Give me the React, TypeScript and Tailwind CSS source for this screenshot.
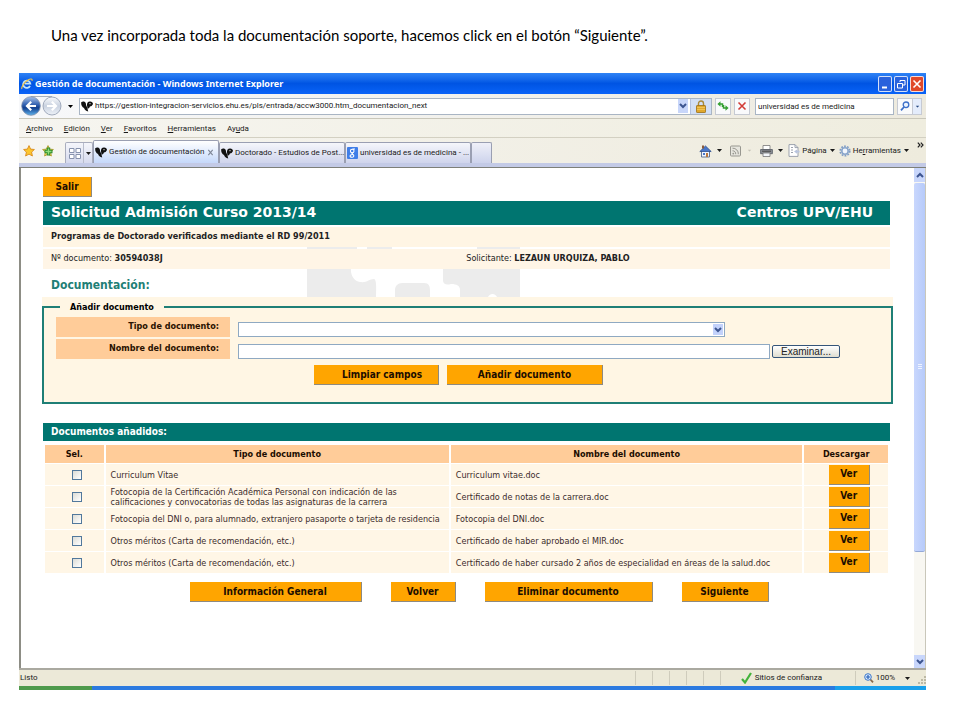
import type { ReactNode } from "react";
import clsx from "clsx";

type AddedDocument = {
  id: number;
  type: string;
  name: string;
};

const addedDocuments: AddedDocument[] = [
  { id: 1, type: "Curriculum Vitae", name: "Curriculum vitae.doc" },
  {
    id: 2,
    type: "Fotocopia de la Certificación Académica Personal con indicación de las calificaciones y convocatorias de todas las asignaturas de la carrera",
    name: "Certificado de notas de la carrera.doc",
  },
  {
    id: 3,
    type: "Fotocopia del DNI o, para alumnado, extranjero pasaporte o tarjeta de residencia",
    name: "Fotocopia del DNI.doc",
  },
  {
    id: 4,
    type: "Otros méritos (Carta de recomendación, etc.)",
    name: "Certificado de haber aprobado el MIR.doc",
  },
  {
    id: 5,
    type: "Otros méritos (Carta de recomendación, etc.)",
    name: "Certificado de haber cursado 2 años de especialidad en áreas de la salud.doc",
  },
];

// Each entry: text before the access key, the key itself, text after it.
const menuItems = [
  ["", "A", "rchivo"],
  ["", "E", "dición"],
  ["", "V", "er"],
  ["", "F", "avoritos"],
  ["", "H", "erramientas"],
  ["Ay", "u", "da"],
];

function Caret({ className }: { className?: string }) {
  return (
    <svg viewBox="0 0 5 3" className={clsx("h-[3px] w-[5px] shrink-0", className)} aria-hidden="true">
      <path d="M0 0h5L2.5 3z" fill="currentColor" />
    </svg>
  );
}

function Chevron({ up = false }: { up?: boolean }) {
  return (
    <svg viewBox="0 0 8 6" className="h-[6px] w-[8px]" aria-hidden="true">
      <path d={up ? "M1 5l3-3 3 3" : "M1 1l3 3 3-3"} fill="none" stroke="#3d5590" strokeWidth="2" />
    </svg>
  );
}

function IeLogo() {
  return (
    <svg viewBox="0 0 12 12" className="h-3 w-3 shrink-0" aria-hidden="true">
      <path d="M9 7.8A3.6 3.6 0 1 1 9.3 5.6H4" fill="none" stroke="#bfe3fb" strokeWidth="1.8" />
      <path d="M1 11C0 9.5 3 4.5 7 2c3-1.8 4.5-1 4 .8" fill="none" stroke="#f3c544" strokeWidth="1.1" />
    </svg>
  );
}

function UniversityLogo() {
  return (
    <svg viewBox="0 0 12 11" className="h-[11px] w-3 shrink-0" aria-hidden="true">
      <path d="M.2 1.2C1.8 0 4.300.500 4.800 2.200 5.100 3.600 5 5 6.200 6.300L7.200 10.500C5 10 3.600 8.800 3 7 1 6.300-.1 3.900.2 1.200z" fill="#111" />
      <path d="M6 4.500C5.600 2 7.200.3 9.200.500 10.800.600 11.900 1.700 12 3 11.200 4.700 10.200 5.500 8.900 5.500 8.500 6.800 7.600 7.600 6.600 7.800z" fill="#111" />
      <path d="M8.300 2.700h1.400" stroke="#fff" strokeWidth=".8" />
    </svg>
  );
}

function GoogleFavicon() {
  return (
    <svg viewBox="0 0 11 12" className="h-3 w-[11px] shrink-0" aria-hidden="true">
      <rect width="11" height="12" rx="1" fill="#3f7ee8" />
      <circle cx="5.2" cy="4" r="1.8" fill="none" stroke="#fff" strokeWidth="1.1" />
      <path d="M8 2H5.500M6 5.700c-2 .6-.8 1.300.2 2C7.500 9 6.500 10.300 5 10.300s-2.600-1-1.500-2.200c.6-.5 1.500-.6 2.500-.5" fill="none" stroke="#fff" strokeWidth="1.1" />
    </svg>
  );
}

function NavArrows() {
  return (
    <svg viewBox="0 0 41 20" className="h-5 w-[41px] shrink-0" aria-hidden="true">
      <defs>
        <linearGradient id="back" x1="0" y1="0" x2="0" y2="1">
          <stop offset="0" stopColor="#a9c3ea" />
          <stop offset=".45" stopColor="#2c5cad" />
          <stop offset=".6" stopColor="#123f8e" />
          <stop offset="1" stopColor="#5fb4ee" />
        </linearGradient>
        <linearGradient id="forward" x1="0" y1="0" x2="0" y2="1">
          <stop offset="0" stopColor="#fafbfd" />
          <stop offset=".5" stopColor="#c9d2e0" />
          <stop offset="1" stopColor="#eef2f8" />
        </linearGradient>
      </defs>
      <path d="M10 .5h21" stroke="#a8b0bd" />
      <circle cx="10" cy="10" r="9.3" fill="url(#back)" stroke="#7d8da8" strokeWidth=".8" />
      <circle cx="31" cy="10" r="9" fill="url(#forward)" stroke="#98a3b5" strokeWidth=".9" />
      <path d="M15 10H6.500M10.200 5.800 6 10l4.200 4.200" fill="none" stroke="#fff" strokeWidth="2.2" />
      <path d="M26 10h8.500M30.800 5.800 35 10l-4.200 4.200" fill="none" stroke="#fff" strokeWidth="2.2" />
    </svg>
  );
}

function StarIcon({ add = false }: { add?: boolean }) {
  return (
    <svg viewBox="0 0 12 12" className="h-3 w-3" aria-hidden="true">
      <path
        d="M6 .6l1.600 3.500 3.800.4-2.800 2.600.8 3.900L6 9.100 2.600 11l.8-3.900L.6 4.500l3.800-.4z"
        fill={add ? "#f6e36a" : "#fcc62d"}
        stroke={add ? "#b09a2b" : "#d98a1c"}
        strokeWidth=".9"
      />
      {add ? (
        <>
          <path d="M6.500 2.500v8M2.500 6.500h8" stroke="#2c8c2a" strokeWidth="3.4" />
          <path d="M6.500 3.500v6M3.500 6.500h6" stroke="#8fdc7c" strokeWidth="1.4" />
        </>
      ) : null}
    </svg>
  );
}

function OrangeButton({ className, children }: { className?: string; children: ReactNode }) {
  return (
    <button
      type="button"
      className={clsx(
        "h-5 cursor-pointer border-r border-b border-[#8e8a80] bg-[#ffa500] text-center text-[10px] leading-[18px] font-bold text-[#1c0d00]",
        className,
      )}
    >
      {children}
    </button>
  );
}

function TitleBar() {
  return (
    <header className="flex h-[21px] items-center gap-[2px] bg-linear-to-b from-[#2f83f5] via-[#0054e3] to-[#0a63f8] pr-[2px] pl-[2px] text-white">
      <IeLogo />
      <h1 className="flex-1 truncate font-['Noto_Sans','Open_Sans',sans-serif] text-[9px] font-bold">
        Gestión de documentación - Windows Internet Explorer
      </h1>
      <div className="flex gap-[2px]">
        <button type="button" aria-label="Minimizar" className="h-4 w-[14px] rounded-xs border border-white/80 bg-[#2a62dc]">
          <svg viewBox="0 0 12 14" aria-hidden="true">
            <path d="M3 10.500h5" stroke="#fff" strokeWidth="2" />
          </svg>
        </button>
        <button type="button" aria-label="Restaurar" className="h-4 w-[14px] rounded-xs border border-white/80 bg-[#2a62dc]">
          <svg viewBox="0 0 12 14" aria-hidden="true">
            <path d="M5 5V3.500h5V8H8M2.500 6.500h5V11h-5z" fill="none" stroke="#fff" />
          </svg>
        </button>
        <button type="button" aria-label="Cerrar" className="h-4 w-[14px] rounded-xs border border-white/80 bg-[#e0492a]">
          <svg viewBox="0 0 12 14" aria-hidden="true">
            <path d="M2.500 3.500l7 7M9.500 3.500l-7 7" stroke="#fff" strokeWidth="1.6" />
          </svg>
        </button>
      </div>
    </header>
  );
}

function AddressBar() {
  return (
    <div className="flex h-[25px] items-center gap-[3px] border-b border-[#c9c7ba] bg-linear-to-r from-[#f7f8fa] to-[#edeade] pr-1 pl-[2px]">
      <NavArrows />
      <button type="button" aria-label="Páginas recientes" className="flex w-[11px] justify-center text-black">
        <Caret />
      </button>
      <div className="flex h-[17px] flex-1 items-center gap-[2px] border border-[#a9b5c4] bg-white pl-px">
        <UniversityLogo />
        <input
          type="text"
          aria-label="Dirección"
          className="min-w-0 flex-1 bg-transparent outline-none"
          defaultValue="https://gestion-integracion-servicios.ehu.es/pls/entrada/accw3000.htm_documentacion_next"
        />
        <button type="button" aria-label="Mostrar direcciones" className="flex h-[14px] w-[10px] items-center justify-center bg-[#c8d6fa]">
          <Chevron />
        </button>
        <span className="flex h-[15px] w-[21px] items-center justify-center border-l border-[#b4c1de] bg-[#d2dff5]">
          <svg viewBox="0 0 10 13" className="h-[13px] w-[10px]" aria-hidden="true">
            <path d="M2.500 6V3.500a2.500 2.500 0 0 1 5 0V6" fill="none" stroke="#a98a3a" strokeWidth="1.4" />
            <rect x=".5" y="5.5" width="9" height="7" rx=".6" fill="#e0a82d" stroke="#9d6f14" strokeWidth=".8" />
            <path d="M1 7.500h8M1 9.500h8" stroke="#f5cf68" strokeWidth=".7" />
          </svg>
        </span>
      </div>
      <button type="button" aria-label="Actualizar" className="flex h-[17px] w-4 items-center justify-center border border-[#c6cad3] bg-[#f9fafc]">
        <svg viewBox="0 0 12 12" className="h-3 w-3" aria-hidden="true">
          <path d="M3.500 10V6.500" stroke="none" />
          <path d="M2.500 4H5.500V7M6.500 5v3h3" fill="none" stroke="#35a032" strokeWidth="1.5" />
          <path d="M3.500 1.300v5.400L.4 4zM8.500 5.300v5.400L11.600 8z" fill="#35a032" />
        </svg>
      </button>
      <button type="button" aria-label="Detener" className="flex h-[17px] w-4 items-center justify-center border border-[#c6cad3] bg-[#f9fafc]">
        <svg viewBox="0 0 10 10" className="h-[10px] w-[10px]" aria-hidden="true">
          <path d="M1.500 1.500l7 7M8.500 1.500l-7 7" stroke="#d23c37" strokeWidth="1.6" />
        </svg>
      </button>
      <input
        type="text"
        aria-label="Buscar"
        className="ml-[2px] h-[17px] w-[139px] border border-[#a9b5c4] bg-white px-[2px] outline-none"
        defaultValue="universidad es de medicina"
      />
      <div className="flex h-[17px] border border-[#c6cad3] bg-[#f9fafc]">
        <button type="button" aria-label="Iniciar búsqueda" className="flex w-[14px] items-center justify-center">
          <svg viewBox="0 0 10 10" className="h-[10px] w-[10px]" aria-hidden="true">
            <circle cx="6" cy="3.8" r="2.8" fill="#eaf3ff" stroke="#3c6fc9" strokeWidth="1.3" />
            <path d="M4 6L1 9.300" stroke="#3c6fc9" strokeWidth="1.8" />
          </svg>
        </button>
        <button type="button" aria-label="Opciones de búsqueda" className="flex w-[9px] items-center justify-center border-l border-[#c6cad3] bg-[#e4ecfb] text-[#26477f]">
          <Caret className="scale-75" />
        </button>
      </div>
    </div>
  );
}

function MenuBar() {
  return (
    <nav className="flex h-[19px] items-center gap-[11px] border-b border-[#d3d0c2] bg-linear-to-r from-[#f6f5f0] to-[#efeddf] pt-[2px] pl-[7px]">
      {menuItems.map(([before, accessKey, after]) => (
        <button key={accessKey} type="button">
          {before}
          <span className="underline">{accessKey}</span>
          {after}
        </button>
      ))}
    </nav>
  );
}

type TabProps = {
  icon: ReactNode;
  label: string;
  active?: boolean;
};

function Tab({ icon, label, active = false }: TabProps) {
  return (
    <div
      className={clsx(
        "flex w-[126px] items-center gap-[2px] rounded-t-xs border border-b-0 border-[#9a9fb2] pl-px",
        active ? "h-[23px] bg-linear-to-b from-white to-[#c5d8fa]" : "h-[21px] bg-linear-to-b from-[#f5f6fb] to-[#cfd4ec]",
      )}
    >
      {icon}
      <button type="button" className="flex-1 text-left whitespace-nowrap">
        {label}
      </button>
      {active ? (
        <button type="button" aria-label="Cerrar pestaña" className="w-3">
          <svg viewBox="0 0 8 8" className="h-[7px] w-[7px]" aria-hidden="true">
            <path d="M1.500 1l5 6M6.500 1l-5 6" stroke="#7f8798" strokeWidth="1.3" />
          </svg>
        </button>
      ) : null}
    </div>
  );
}

function CommandBar() {
  return (
    <div className="flex h-[25px] items-center pr-[2px]">
      <button type="button" aria-label="Página principal" className="flex items-center gap-[5px]">
        <svg viewBox="0 0 13 14" className="h-[14px] w-[13px]" aria-hidden="true">
          <path d="M2.500 7v6h8V7" fill="#eef4ff" stroke="#53698f" strokeWidth=".9" />
          <path d="M.8 7.500L6.500 2l5.700 5.500z" fill="#4a77c9" stroke="#2f4f8e" strokeWidth=".8" />
          <path d="M3 1.500h2v3H3z" fill="#8a5a3d" />
          <path d="M7 9h2v4H7z" fill="#b8763d" />
          <path d="M4 9h2v2H4z" fill="#4a77c9" />
        </svg>
        <Caret />
      </button>
      <button type="button" aria-label="Fuentes" className="ml-2 flex items-center gap-[6px] text-[#c5c3b8]">
        <svg viewBox="0 0 11 12" className="h-3 w-[11px]" aria-hidden="true">
          <rect x=".5" y="1" width="10" height="10" rx="1" fill="#e7e6df" stroke="#989790" />
          <path d="M2.500 3.200a5.500 5.500 0 0 1 5.800 6M2.500 5.800a3 3 0 0 1 3.200 3.400" fill="none" stroke="#989790" />
          <circle cx="3.3" cy="8.6" r=".9" fill="#989790" />
        </svg>
        <Caret className="scale-75" />
      </button>
      <button type="button" aria-label="Imprimir" className="ml-2 flex items-center gap-[5px]">
        <svg viewBox="0 0 13 12" className="h-3 w-[13px]" aria-hidden="true">
          <path d="M3 .5h7v4H3z" fill="#fff" stroke="#777" strokeWidth=".8" />
          <path d="M.6 4.500h11.800v4.200H.6z" fill="#8b8f96" stroke="#555a63" strokeWidth=".8" />
          <path d="M3 8h7v3.500H3z" fill="#f2f5fa" stroke="#777" strokeWidth=".8" />
          <path d="M2 6.200h9" stroke="#444" />
        </svg>
        <Caret />
      </button>
      <button type="button" className="ml-[5px] flex items-center gap-[2px]">
        <svg viewBox="0 0 12 13" className="h-[13px] w-3" aria-hidden="true">
          <path d="M1 .6h6l3 3v8.800H1z" fill="#fff" stroke="#9299a6" strokeWidth=".9" />
          <path d="M7 .6v3h3M3 3.500h2M3 6h2M3 8.500h2" fill="none" stroke="#9299a6" strokeWidth=".9" />
          <path d="M6 7.500l3-2v1.300h2.500v1.800H9v1.200z" fill="#b8c4de" />
        </svg>
        <span>Página</span>
        <Caret className="ml-px" />
      </button>
      <button type="button" className="ml-1 flex items-center gap-[2px]">
        <svg viewBox="0 0 12 12" className="h-3 w-3" aria-hidden="true">
          <circle cx="6" cy="6" r="4.8" fill="none" stroke="#7f9cc4" strokeWidth="1.6" strokeDasharray="1.8 1.216" />
          <circle cx="6" cy="6" r="3.2" fill="#f2f6fc" stroke="#8aa6cc" strokeWidth="1.6" />
        </svg>
        <span>
          He<span className="underline">r</span>ramientas
        </span>
        <Caret className="ml-px" />
      </button>
      <button type="button" aria-label="Más comandos" className="ml-2 flex self-start">
        <svg viewBox="0 0 7 6" className="mt-1 h-[6px] w-[7px]" aria-hidden="true">
          <path d="M.8.600 3 3 .8 5.400M3.800.600 6 3 3.800 5.400" fill="none" stroke="#222" strokeWidth="1.2" />
        </svg>
      </button>
    </div>
  );
}

function TabBar() {
  return (
    <div className="flex h-[25px] items-end bg-linear-to-r from-[#f6f5f1] to-[#eeebdd] pl-1">
      <div className="flex h-[25px] items-center gap-[7px] pr-[11px]">
        <button type="button" aria-label="Centro de favoritos">
          <StarIcon />
        </button>
        <button type="button" aria-label="Agregar a favoritos">
          <StarIcon add />
        </button>
      </div>
      <div className="flex h-[21px] rounded-t-xs border border-b-0 border-[#a9adbd] bg-linear-to-b from-[#f5f6fb] to-[#d6daee]">
        <button type="button" aria-label="Pestañas rápidas" className="flex w-[17px] items-center justify-center">
          <svg viewBox="0 0 12 11" className="h-[11px] w-3" aria-hidden="true">
            <path d="M.5.500h4.500v4H.500zM7 .5h4.500v4H7zM.5 6.500h4.500v4H.500zM7 6.500h4.500v4H7z" fill="#fff" stroke="#8792ad" />
          </svg>
        </button>
        <button type="button" aria-label="Lista de pestañas" className="flex w-[9px] items-center justify-center border-l border-[#b9bdcc]">
          <Caret />
        </button>
      </div>
      <Tab icon={<UniversityLogo />} label="Gestión de documentación" active />
      <Tab icon={<UniversityLogo />} label="Doctorado - Estudios de Post..." />
      <Tab icon={<GoogleFavicon />} label="universidad es de medicina - ..." />
      <button
        type="button"
        aria-label="Nueva pestaña"
        className="h-[21px] w-[21px] rounded-t-xs border border-b-0 border-[#9a9fb2] bg-linear-to-b from-[#eff0f8] to-[#cdd3ec]"
      />
      <div className="flex-1" />
      <CommandBar />
    </div>
  );
}

// Faint jigsaw logo that shows between the cream rows.
function Watermark() {
  return (
    <svg viewBox="0 0 213 72" className="absolute top-0 left-[264px] h-[72px] w-[213px]" aria-hidden="true">
      <path
        d="M0 20h50v4H0zM60 20h25v4H60zM170 20h43v4h-43zM0 42h44c-1 8 3 14 9 15 7 1 9-3 14-3 3 1 2 10 2 18H0zM88 72V64c1-5 4-6 9-6h20c5 0 6 3 6 8v6z"
        fill="#ececec"
      />
      <path d="M136 42v14c1 4 4 4 8 3 6 0 9 2 9 6v7h60V42z" fill="#ececec" />
      <path d="M181 72c2-4 7-4 9 0z" fill="#fff" />
    </svg>
  );
}

function AddDocumentForm() {
  return (
    <form className="-mr-[3px] -ml-px bg-[#fff6e4]">
      <fieldset className="border-2 border-[#1f7f76] px-3 pb-4">
        <legend className="ml-1 h-5 px-[10px] text-[9px] leading-5 font-bold text-black">Añadir documento</legend>
        <div className="grid grid-cols-[174px_1fr] gap-x-2 gap-y-[2px]">
          <label htmlFor="document-type" className="h-5 bg-[#ffcc99] pr-[11px] text-right text-[9px] leading-[18px] font-bold text-[#2a1200]">
            Tipo de documento:
          </label>
          <div className="flex items-end">
            <div className="relative w-[76%]">
              <select
                id="document-type"
                className="block h-[15px] w-full appearance-none border border-[#8fa9c2] bg-white"
              />
              <span className="pointer-events-none absolute top-[2px] right-[2px] flex h-[11px] w-[10px] items-center justify-center bg-[#c3d2fb]">
                <Chevron />
              </span>
            </div>
          </div>
          <label htmlFor="document-name" className="h-5 bg-[#ffcc99] pr-[11px] text-right text-[9px] leading-[18px] font-bold text-[#2a1200]">
            Nombre del documento:
          </label>
          <div className="flex items-end gap-[2px]">
            <input id="document-name" type="text" className="h-[15px] w-[83%] border border-[#8fa9c2] bg-white px-1" />
            <button
              type="button"
              className="mb-px h-[13px] w-[68px] rounded-xs border border-[#35557a] bg-linear-to-b from-white to-[#dfddd0] font-['Liberation_Sans',sans-serif] text-[10px] leading-[11px] text-[#222]"
            >
              Examinar...
            </button>
          </div>
        </div>
        <div className="mt-[6px] flex justify-center gap-2 pr-[18px] pb-px">
          <OrangeButton className="w-[125px] pl-3">Limpiar campos</OrangeButton>
          <OrangeButton className="w-[156px]">Añadir documento</OrangeButton>
        </div>
      </fieldset>
    </form>
  );
}

function DocumentsTable() {
  return (
    <table className="w-full table-fixed border-separate border-spacing-x-[2px] border-spacing-y-px text-[9px] leading-[10px] text-[#3b2b2b]">
      <colgroup>
        <col className="w-[7%]" />
        <col />
        <col className="w-[42%]" />
        <col className="w-[10%]" />
      </colgroup>
      <thead>
        <tr className="h-[18px] bg-[#ffcc99] text-[#1c0d00]">
          <th>Sel.</th>
          <th>Tipo de documento</th>
          <th>Nombre del documento</th>
          <th>Descargar</th>
        </tr>
      </thead>
      <tbody>
        {addedDocuments.map((item) => (
          <tr key={item.id} className="h-[21px] bg-[#fff6e6]">
            <td className="pl-[6px]">
              <input
                type="checkbox"
                aria-label={`Seleccionar ${item.name}`}
                className="mx-auto block h-[10px] w-[10px] appearance-none border border-[#51789c] bg-linear-to-br from-[#dcdcd6] to-white checked:bg-[#51789c]"
              />
            </td>
            <td className="pr-px pl-[5px]">{item.type}</td>
            <td className="pr-px pl-[5px]">{item.name}</td>
            <td className="pl-[6px] text-center">
              <OrangeButton className="mx-auto block w-[41px]">Ver</OrangeButton>
            </td>
          </tr>
        ))}
      </tbody>
    </table>
  );
}

function ApplicationPage() {
  return (
    <main className="min-w-0 flex-1 border-l-2 border-[#8d8d85] bg-white pt-[9px] pr-6 pb-[66px] pl-[22px] font-['DejaVu_Sans_Condensed','DejaVu_Sans',sans-serif]">
      <OrangeButton className="block w-[49px]">Salir</OrangeButton>
      <div className="mt-1 flex h-6 items-center justify-between bg-[#007570] pr-[17px] pb-[2px] pl-2 font-['DejaVu_Sans',sans-serif] text-[14px] leading-5 font-bold text-white">
        <h2>Solicitud Admisión Curso 2013/14</h2>
        <p>Centros UPV/EHU</p>
      </div>
      <section className="relative">
        <Watermark />
        <div className="relative pt-[2px] text-[9px] text-[#222]">
          <p className="h-5 bg-[#fff5e4] pl-2 leading-[19px] font-bold">
            Programas de Doctorado verificados mediante el RD 99/2011
          </p>
          <div className="mt-[2px] grid h-5 grid-cols-[49fr_50fr] bg-[#fff5e6] pl-2 leading-[19px]">
            <p>
              Nº documento: <b>30594038J</b>
            </p>
            <p>
              Solicitante: <b>LEZAUN URQUIZA, PABLO</b>
            </p>
          </div>
          <h3 className="h-7 pt-[6px] pl-2 text-[12px] leading-5 font-bold text-[#1f7f76]">Documentación:</h3>
        </div>
      </section>
      <AddDocumentForm />
      <h3 className="mt-[19px] h-[18px] bg-[#007570] pl-2 text-[10px] leading-[17px] font-bold text-white">Documentos añadidos:</h3>
      <div className="mt-[3px]">
        <DocumentsTable />
      </div>
      <div className="mt-2 flex justify-center gap-[29px] pl-[25px]">
        <OrangeButton className="w-[172px]">Información General</OrangeButton>
        <OrangeButton className="w-[65px]">Volver</OrangeButton>
        <OrangeButton className="w-[168px]">Eliminar documento</OrangeButton>
        <OrangeButton className="w-[87px]">Siguiente</OrangeButton>
      </div>
    </main>
  );
}

function ScrollBar() {
  return (
    <div className="flex w-3 shrink-0 flex-col items-stretch border-r border-[#c9c7ba] bg-[#f8f7f2]">
      <button type="button" aria-label="Subir" className="flex h-[14px] items-center justify-center bg-[#c8d6fb]">
        <Chevron up />
      </button>
      <div className="mt-px flex flex-[370] flex-col items-center justify-center gap-px rounded-xs border-b border-[#94a9d8] bg-linear-to-r from-[#c9d7fd] to-[#b6cafa]">
        <span className="h-px w-1 bg-[#eef3ff]" />
        <span className="h-px w-1 bg-[#eef3ff]" />
        <span className="h-px w-1 bg-[#eef3ff]" />
      </div>
      <div className="flex-[104]" />
      <button type="button" aria-label="Bajar" className="flex h-[13px] items-center justify-center bg-[#c8d6fb]">
        <Chevron />
      </button>
    </div>
  );
}

function StatusBar() {
  return (
    <footer className="flex h-[18px] items-center border-t-2 border-[#aaa9a0] bg-[#ece9d8] pl-px">
      <span className="flex-1">Listo</span>
      <div className="flex h-[14px]">
        {[0, 1, 2, 3, 4].map((pane) => (
          <span key={pane} className="w-[17px] border-l border-[#cfccbc]" />
        ))}
      </div>
      <div className="flex h-[14px] w-[135px] items-center gap-[3px] border-l border-[#cfccbc] pl-5">
        <svg viewBox="0 0 11 12" className="h-3 w-[11px] shrink-0" aria-hidden="true">
          <path d="M1 7l3 3.500L10 1" fill="none" stroke="#43b33b" strokeWidth="2.2" />
        </svg>
        <span>Sitios de confianza</span>
      </div>
      <button type="button" className="flex h-[14px] items-center gap-[2px] border-l border-[#cfccbc] pl-2">
        <svg viewBox="0 0 10 10" className="h-[10px] w-[10px]" aria-hidden="true">
          <path d="M6 6l3 3.300" stroke="#8a6a4a" strokeWidth="1.8" />
          <circle cx="4" cy="4" r="3.3" fill="#dcebff" stroke="#3c78c8" />
          <path d="M4 2v4M2 4h4" stroke="#2360b8" strokeWidth="1.2" />
        </svg>
        <span>100%</span>
        <Caret className="ml-2" />
      </button>
      <svg viewBox="0 0 8 8" className="mt-1 ml-2 h-2 w-2" aria-hidden="true">
        <path d="M6 0h2v2H6zM3 3h2v2H3zM6 3h2v2H6zM0 6h2v2H0zM3 6h2v2H3zM6 6h2v2H6z" fill="#bdb9a5" />
      </svg>
    </footer>
  );
}

export default function App() {
  return (
    <div className="min-h-screen bg-white pt-[25px] pr-[34px] pl-[19px] font-['Roboto','Liberation_Sans',sans-serif] text-[8px] leading-3 text-[#1a1a1a]">
      <p className="pl-8 font-['Lato',sans-serif] text-[15px] leading-5 text-black">
        Una vez incorporada toda la documentación soporte, hacemos click en el botón “Siguiente”.
      </p>
      <div className="mt-7">
        <TitleBar />
        <AddressBar />
        <MenuBar />
        <TabBar />
        <div className="h-[5px] border-b border-[#7d7f78] bg-[#c3cae6]" />
        <div className="flex">
          <ApplicationPage />
          <ScrollBar />
        </div>
        <StatusBar />
        <div className="flex h-1 bg-[#2b7ae0]">
          <span className="w-[8%] bg-[#4f9a4c]" />
          <span className="flex-1" />
          <span className="w-[10%] bg-[#1aa0ea]" />
        </div>
      </div>
    </div>
  );
}
